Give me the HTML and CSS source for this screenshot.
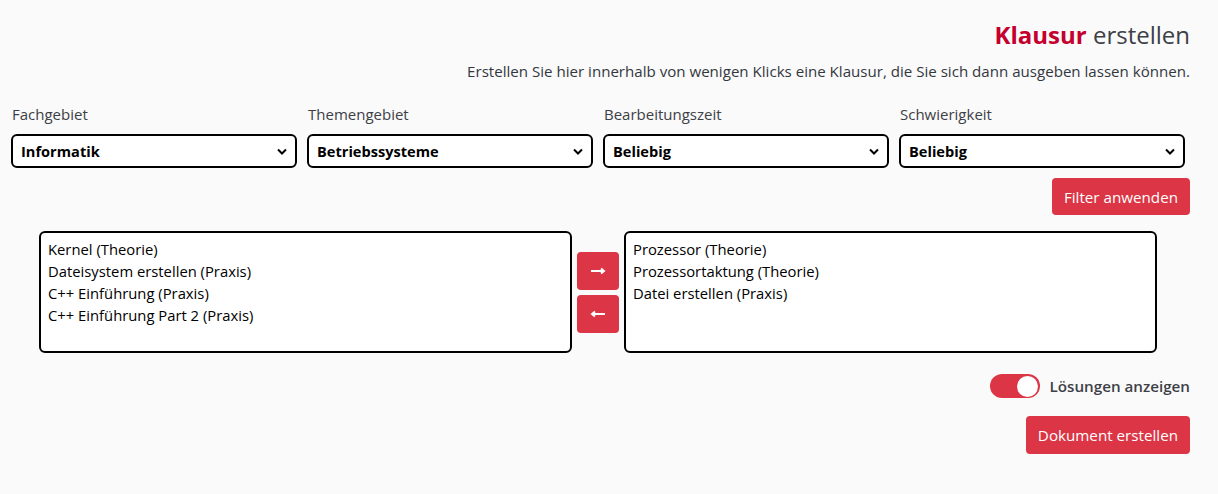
FILE: index.html
```html
<!DOCTYPE html>
<html lang="de">
<head>
<meta charset="utf-8">
<title>Klausur erstellen</title>
<link rel="stylesheet" href="styles.css">
</head>
<body>
<main class="page">
  <header class="head">
    <h1 class="title"><strong>Klausur</strong> erstellen</h1>
    <p class="lead">Erstellen Sie hier innerhalb von wenigen Klicks eine Klausur, die Sie sich dann ausgeben lassen können.</p>
  </header>

  <section class="filters">
    <label class="field">
      <span class="field-label">Fachgebiet</span>
      <span class="select"><span>Informatik</span><svg class="chev" viewBox="0 0 10 6"><path d="M1 1l4 4 4-4"/></svg></span>
    </label>
    <label class="field">
      <span class="field-label">Themengebiet</span>
      <span class="select"><span>Betriebssysteme</span><svg class="chev" viewBox="0 0 10 6"><path d="M1 1l4 4 4-4"/></svg></span>
    </label>
    <label class="field">
      <span class="field-label">Bearbeitungszeit</span>
      <span class="select"><span>Beliebig</span><svg class="chev" viewBox="0 0 10 6"><path d="M1 1l4 4 4-4"/></svg></span>
    </label>
    <label class="field">
      <span class="field-label">Schwierigkeit</span>
      <span class="select"><span>Beliebig</span><svg class="chev" viewBox="0 0 10 6"><path d="M1 1l4 4 4-4"/></svg></span>
    </label>
  </section>

  <div class="actions">
    <button class="btn btn-filter">Filter anwenden</button>
  </div>

  <section class="transfer">
    <ul class="listbox">
      <li>Kernel (Theorie)</li>
      <li>Dateisystem erstellen (Praxis)</li>
      <li>C++ Einführung (Praxis)</li>
      <li>C++ Einführung Part 2 (Praxis)</li>
    </ul>
    <div class="arrows">
      <button class="btn btn-arrow" aria-label="hinzufügen"><svg class="arrow" viewBox="0 0 16 8"><path d="M1 4h13M11 1.5l3 2.5-3 2.5"/></svg></button>
      <button class="btn btn-arrow" aria-label="entfernen"><svg class="arrow" viewBox="0 0 16 8"><path d="M15 4H2M5 1.5L2 4l3 2.5"/></svg></button>
    </div>
    <ul class="listbox">
      <li>Prozessor (Theorie)</li>
      <li>Prozessortaktung (Theorie)</li>
      <li>Datei erstellen (Praxis)</li>
    </ul>
  </section>

  <div class="switch-row">
    <span class="switch"><span class="knob"></span></span>
    <span class="switch-label">Lösungen anzeigen</span>
  </div>

  <div class="actions">
    <button class="btn btn-doc">Dokument erstellen</button>
  </div>
</main>
</body>
</html>
```
FILE: styles.css
```css
* { box-sizing: border-box; }
html, body { margin: 0; padding: 0; }
body {
  background: #fafafa;
  font-family: "Open Sans", "Noto Sans", "Liberation Sans", sans-serif;
  color: #212529;
  font-size: 15px;
}
.page {
  width: 1218px;
  padding: 0 28px 0 11px;
}
.head {
  text-align: right;
}
.title {
  margin: 0;
  padding-top: 19px;
  font-size: 24px;
  line-height: 32px;
  font-weight: 500;
  color: #3d4046;
}
.title strong {
  color: #c4002f;
  font-weight: 700;
}
.lead {
  margin: 9px 0 0;
  font-size: 15.1px;
  line-height: 22px;
  color: #33373d;
}
.filters {
  display: grid;
  grid-template-columns: repeat(4, 286px);
  column-gap: 10px;
  margin-top: 21px;
}
.field { display: flex; flex-direction: column; }
.field-label {
  font-size: 15px;
  line-height: 22px;
  color: #3d4046;
  margin-left: 1px;
}
.select {
  margin-top: 9px;
  height: 34px;
  border: 2px solid #000;
  border-radius: 6px;
  background: #fff;
  display: flex;
  align-items: center;
  justify-content: space-between;
  padding: 0 8px;
  font-weight: 700;
  font-size: 14.6px;
  color: #000;
}
.chev {
  width: 10px;
  height: 7px;
  fill: none;
  stroke: #000;
  stroke-width: 2;
}
.actions {
  display: flex;
  justify-content: flex-end;
}
.btn {
  border: 0;
  border-radius: 4px;
  background: #dc3545;
  color: #fff;
  font-family: inherit;
  font-size: 15.2px;
}
.btn-filter {
  margin-top: 10px;
  height: 37px;
  padding: 0 12px;
}
.transfer {
  display: flex;
  align-items: center;
  gap: 5px;
  margin: 16px 0 0 28px;
}
.listbox {
  list-style: none;
  margin: 0;
  width: 533px;
  height: 122px;
  border: 2px solid #000;
  border-radius: 6px;
  background: #fff;
  padding: 5px 7px;
  font-size: 14.8px;
  line-height: 22px;
  color: #000;
}
.arrows {
  display: flex;
  flex-direction: column;
  gap: 5px;
}
.btn-arrow {
  width: 42px;
  height: 38px;
  padding: 0;
  display: flex;
  align-items: center;
  justify-content: center;
}
.arrow {
  width: 16px;
  height: 8px;
  fill: none;
  stroke: #fff;
  stroke-width: 2;
}
.switch-row {
  display: flex;
  justify-content: flex-end;
  align-items: center;
  gap: 10px;
  margin-top: 21px;
}
.switch {
  width: 50px;
  height: 24px;
  border-radius: 12px;
  background: #dc3545;
  display: flex;
  align-items: center;
  justify-content: flex-end;
  padding-right: 2px;
}
.knob {
  width: 21px;
  height: 21px;
  border-radius: 50%;
  background: #fff;
}
.switch-label {
  font-weight: 600;
  font-size: 15.2px;
  color: #3d4046;
}
.btn-doc {
  margin-top: 18px;
  height: 38px;
  padding: 0 12px;
}
```
